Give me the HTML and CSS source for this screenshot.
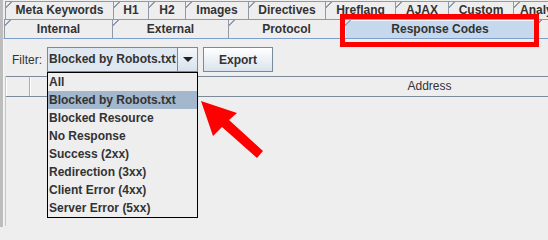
FILE: index.html
```html
<!DOCTYPE html>
<html>
<head>
<meta charset="utf-8">
<link rel="stylesheet" href="styles.css">
</head>
<body>
<div class="screen">
  <div class="tabs">
    <div class="tabrow row1">
      <div class="tab w-mk">Meta Keywords</div>
      <div class="tab w-h1">H1</div>
      <div class="tab w-h2">H2</div>
      <div class="tab w-img">Images</div>
      <div class="tab w-dir">Directives</div>
      <div class="tab w-href">Hreflang</div>
      <div class="tab w-ajax">AJAX</div>
      <div class="tab w-cust">Custom</div>
      <div class="tab w-anal">Analytics</div>
    </div>
    <div class="tabrow row2">
      <div class="tab w-int">Internal</div>
      <div class="tab w-ext">External</div>
      <div class="tab w-prot">Protocol</div>
      <div class="tab w-resp selected">Response Codes</div>
      <div class="tab w-more"></div>
    </div>
  </div>
  <div class="panel">
    <div class="filter-row">
      <span class="filter-label">Filter:</span>
      <div class="combo">
        <div class="combo-text">Blocked by Robots.txt</div>
        <div class="combo-btn"><span class="tri"></span></div>
        <ul class="popup">
          <li>All</li>
          <li class="hl">Blocked by Robots.txt</li>
          <li>Blocked Resource</li>
          <li>No Response</li>
          <li>Success (2xx)</li>
          <li>Redirection (3xx)</li>
          <li>Client Error (4xx)</li>
          <li>Server Error (5xx)</li>
        </ul>
      </div>
      <button class="export">Export</button>
    </div>
    <div class="table">
      <div class="thead">
        <div class="th c1"></div>
        <div class="th c2"></div>
        <div class="th c3">Address</div>
      </div>
      <div class="tbody"></div>
    </div>
  </div>
  <div class="redbox"></div>
  <svg class="arrow" width="548" height="227" viewBox="0 0 548 227">
    <polygon points="201,101 237,113 229,120 263,151 257,158 222,127 213,136" fill="#ff0000"/>
  </svg>
</div>
</body>
</html>
```

FILE: styles.css
```css
* { box-sizing: border-box; }
html, body { margin: 0; padding: 0; }
body {
  background: #eeeeee;
  font-family: "Liberation Sans", Arial, sans-serif;
  font-size: 12px;
  color: #333333;
  width: 548px;
  height: 227px;
  overflow: hidden;
}
.screen {
  position: relative;
  width: 548px;
  height: 227px;
  overflow: hidden;
  border-left: 3px solid #bdbdbd;
}
.tabs { padding-top: 1px; }
.tabrow { display: flex; white-space: nowrap; }
.row1 { height: 18px; margin-left: 2px; }
.row2 { height: 19px; margin-left: 1px; }
.tab {
  position: relative;
  flex: none;
  background: #eeeeee;
  border: 1px solid #8e9aa8;
  border-bottom: none;
  margin-right: -1px;
  font-weight: bold;
  text-align: center;
  line-height: 16px;
  overflow: hidden;
}
.row2 .tab { line-height: 18px; }
.tab::before {
  content: "";
  position: absolute;
  left: -1px;
  top: -1px;
  width: 7px;
  height: 7px;
  background: linear-gradient(135deg, #eeeeee 0 46%, #8e9aa8 46% 58%, transparent 58%);
}
.tab.selected {
  background: #c6d8ee;
  border-color: #8ea7c9;
  box-shadow: inset 1px 1px 0 #ffffff;
}
.tab.selected::before {
  background: linear-gradient(135deg, #eeeeee 0 46%, #8ea7c9 46% 58%, transparent 58%);
}
.w-mk { width: 109px; }
.w-h1 { width: 36px; }
.w-h2 { width: 38px; }
.w-img { width: 64px; }
.w-dir { width: 78px; }
.w-href { width: 71px; }
.w-ajax { width: 54px; }
.w-cust { width: 66px; }
.w-anal { width: 70px; text-align: left; padding-left: 6px; }
.w-int { width: 109px; }
.w-ext { width: 117px; }
.w-prot { width: 117px; }
.w-resp { width: 192px; }
.w-more { width: 60px; }

.panel {
  border-top: 1px solid #7f9fcf;
  border-left: 1px solid #f6f6f6;
  height: 190px;
}
.filter-row {
  display: flex;
  align-items: center;
  margin-top: 8px;
  margin-left: 8px;
  height: 25px;
}
.filter-label {
  width: 35px;
  flex: none;
}
.combo {
  position: relative;
  display: flex;
  width: 151px;
  height: 25px;
  flex: none;
}
.combo-text {
  flex: 1;
  border: 1px solid #7a8a99;
  background: #dfe8f1;
  font-weight: bold;
  line-height: 23px;
  padding-left: 1px;
  white-space: nowrap;
  overflow: hidden;
}
.combo-btn {
  width: 20px;
  border: 1px solid #7a8a99;
  border-left: none;
  background: linear-gradient(#f4f7fa, #d8e2ec);
  display: flex;
  align-items: center;
  justify-content: center;
}
.tri {
  width: 0;
  height: 0;
  border-left: 5px solid transparent;
  border-right: 5px solid transparent;
  border-top: 5px solid #222222;
}
.popup {
  position: absolute;
  left: 0;
  top: 25px;
  width: 151px;
  height: 146px;
  margin: 0;
  padding: 0;
  list-style: none;
  background: #eeeeee;
  border: 1px solid #000000;
  z-index: 5;
}
.popup li {
  height: 18px;
  line-height: 18px;
  font-weight: bold;
  padding-left: 1px;
  white-space: nowrap;
}
.popup li.hl { background: #a3b8cc; }
.export {
  margin-left: 5px;
  width: 70px;
  height: 25px;
  border: 1px solid #7a8a99;
  background: linear-gradient(#ffffff, #d9e3ed);
  font-family: "Liberation Sans", Arial, sans-serif;
  font-size: 12px;
  font-weight: bold;
  color: #333333;
  padding: 0;
}
.table {
  margin-top: 4px;
  margin-left: 1px;
  border-left: 1px solid #c4c8cc;
  height: 150px;
  overflow: hidden;
}
.thead {
  display: flex;
  height: 21px;
  border-top: 1px solid #7d8b99;
  border-bottom: 1px solid #7d8b99;
}
.th {
  flex: none;
  height: 19px;
  border-right: 1px solid #a6aeb6;
  box-shadow: inset 1px 0 0 #ffffff;
  text-align: center;
  line-height: 19px;
}
.c1 { width: 24px; }
.c2 { width: 31px; }
.c3 { width: 738px; }

.redbox {
  position: absolute;
  left: 337px;
  top: 14px;
  width: 199px;
  height: 33px;
  border: 5px solid #ff0000;
}
.arrow {
  position: absolute;
  left: -3px;
  top: 0;
  pointer-events: none;
}
```
